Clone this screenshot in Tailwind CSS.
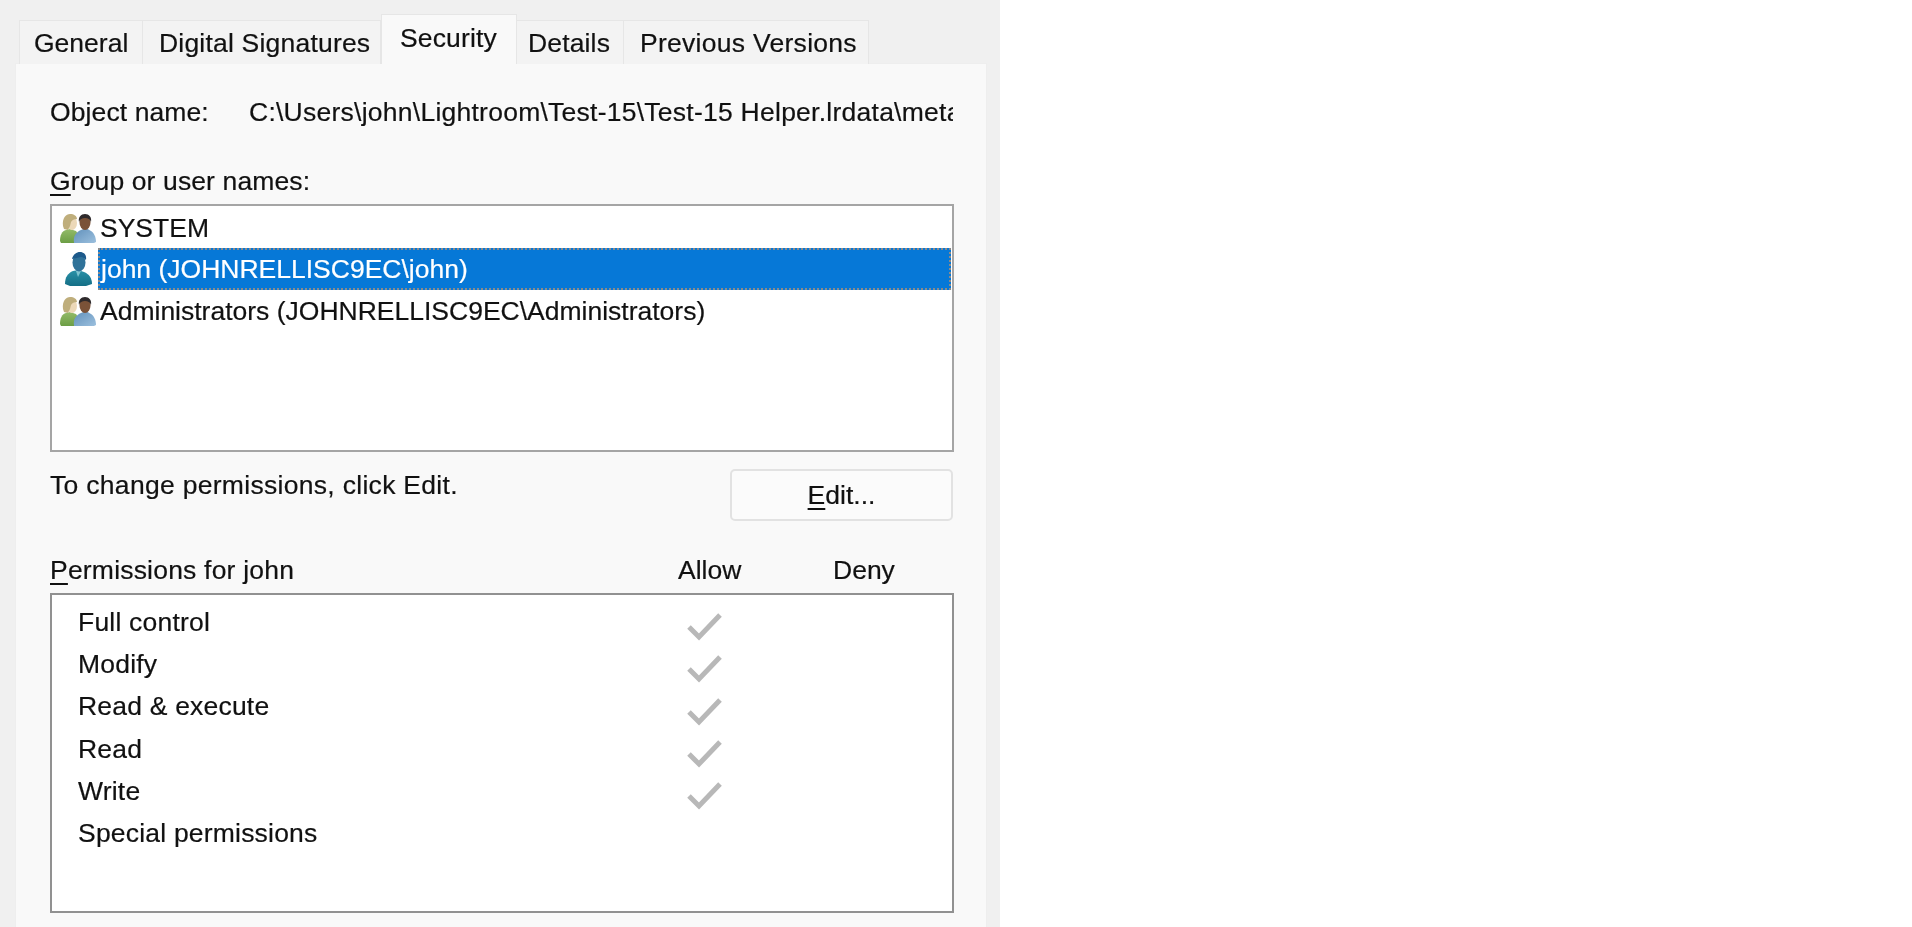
<!DOCTYPE html>
<html>
  <head>
    <title>Security</title>
    <script src="https://cdn.jsdelivr.net/npm/@tailwindcss/browser@4"></script>
  </head>
  <body class="bg-white">
    <svg width="0" height="0" class="absolute">
      <defs>
        <linearGradient id="male-shirt" x1="0" y1="0" x2="1" y2="1">
          <stop offset="0" stop-color="#5f8fba" />
          <stop offset="1" stop-color="#9cc0de" />
        </linearGradient>
        <linearGradient id="female-shirt" x1="0" y1="0" x2="0" y2="1">
          <stop offset="0" stop-color="#93bb6a" />
          <stop offset="1" stop-color="#6c9e45" />
        </linearGradient>
        <linearGradient id="user-shirt" x1="0" y1="0" x2="0" y2="1">
          <stop offset="0" stop-color="#2a91a8" />
          <stop offset="1" stop-color="#146f86" />
        </linearGradient>
        <symbol id="group" viewBox="0 0 36 30">
          <path d="M0 28c0-6 2-10 6-11l4-1 6 2 4 6v6H1z" fill="url(#female-shirt)" />
          <ellipse cx="12" cy="10" rx="5" ry="7" fill="#ecd8b8" />
          <path d="M3 13C2 5 6 1 10 1s7 2 7 5c-3 0-5 1-6 3l-1 4-2 4-4-1z" fill="#bfae7c" />
          <path d="M14 30c-1-7 2-11 7-13l5-2 5 3c3 2 5 6 5 11l-2 1z" fill="url(#male-shirt)" />
          <ellipse cx="25" cy="9.5" rx="5.5" ry="7.5" fill="#7a5238" />
          <path d="M19 9c-1-5 2-8 6-8s7 3 6 8c-1-3-3-4-6-4s-5 1-6 4z" fill="#2e2a2c" />
        </symbol>
        <symbol id="user" viewBox="0 0 27 34">
          <path d="M0 32c0-7 3-11 8-13l5-1 6 2c5 2 8 6 8 12l-6 2H5z" fill="url(#user-shirt)" />
          <path d="M11 19l2 6 3-6z" fill="#7cc3cf" />
          <ellipse cx="14" cy="10.5" rx="6.5" ry="9" fill="#2f7299" />
          <path d="M7 7c1-4 4-7 8-7s7 3 6 8c-2-2-3-3-5-3-3 1-6 1-9 2z" fill="#1d5a8b" />
        </symbol>
        <symbol id="check" viewBox="0 0 36 30">
          <path d="M2 15l10 10L33 3" fill="none" stroke="#b8b8b8" stroke-width="5" />
        </symbol>
      </defs>
    </svg>

    <div class="w-[1000px] h-[927px] overflow-hidden blur-[0.5px] bg-[#f0f0f0] text-[26.5px] leading-[32px] text-[#111] [-webkit-text-stroke:0.2px_#111] font-['Liberation_Sans',Arial,sans-serif]">
      <!-- tabs -->
      <div class="flex items-end h-[64px] pl-[19px] pt-[15px]">
        <div class="flex items-center h-[44px] w-[124px] pl-[14px] bg-[#f3f3f3] border border-b-0 border-[#e6e6e6]">General</div>
        <div class="flex items-center h-[44px] w-[238px] pl-[16px] tracking-[0.2px] bg-[#f3f3f3] border border-l-0 border-b-0 border-[#e6e6e6]">Digital Signatures</div>
        <div class="relative z-10 flex items-start h-[50px] w-[136px] pl-[18px] pt-[7px] tracking-[0.15px] bg-[#f9f9f9] border border-b-0 border-[#e6e6e6]">Security</div>
        <div class="flex items-center h-[44px] w-[107px] pl-[11px] tracking-[0.15px] bg-[#f3f3f3] border border-l-0 border-b-0 border-[#e6e6e6]">Details</div>
        <div class="flex items-center h-[44px] w-[245px] pl-[16px] tracking-[0.28px] bg-[#f3f3f3] border border-l-0 border-b-0 border-[#e6e6e6]">Previous Versions</div>
      </div>

      <!-- panel -->
      <div class="ml-[15px] w-[972px] h-[880px] pl-[34px] pr-[33px] -mt-px bg-[#f9f9f9] border border-[#eeeeee]">
        <div class="flex pt-[32px] h-[95px]">
          <div class="w-[199px] shrink-0 tracking-[0.1px]">Object name:</div>
          <div class="w-[704px] overflow-hidden whitespace-nowrap tracking-[0.25px]">C:\Users\john\Lightroom\Test-15\Test-15 Helper.lrdata\metadata</div>
        </div>

        <div class="h-[45px] pt-[6px] tracking-[0.12px]"><u class="underline-offset-[4px]">G</u>roup or user names:</div>

        <div class="w-[904px] h-[248px] bg-white border-2 border-[#a5a5a5] pt-[1px]">
          <div class="flex items-center h-[41px]">
            <svg class="w-[36px] h-[30px] ml-[8px] mr-[4px] shrink-0"><use href="#group" /></svg>
            <span>SYSTEM</span>
          </div>
          <div class="flex items-center h-[42px]">
            <svg class="w-[27px] h-[34px] ml-[13px] mr-[6px] shrink-0"><use href="#user" /></svg>
            <span class="flex items-center w-[853px] h-[42px] pl-[1px] bg-[#0678d7] text-white [-webkit-text-stroke:0.2px_#fff] border-2 border-dotted border-[#8a8a8a]">john (JOHNRELLISC9EC\john)</span>
          </div>
          <div class="flex items-center h-[41px]">
            <svg class="w-[36px] h-[30px] ml-[8px] mr-[4px] shrink-0"><use href="#group" /></svg>
            <span>Administrators (JOHNRELLISC9EC\Administrators)</span>
          </div>
        </div>

        <div class="flex justify-between items-start w-[903px] h-[100px] pt-[17px]">
          <div class="tracking-[0.3px]">To change permissions, click Edit.</div>
          <div class="flex items-center justify-center w-[223px] h-[52px] bg-[#fbfbfb] border-2 border-[#e2e2e2] rounded-[5px]"><span><u class="underline-offset-[4px]">E</u>dit...</span></div>
        </div>

        <div class="flex h-[41px] pt-[2px]">
          <div class="w-[628px] tracking-[0.2px]"><u class="underline-offset-[4px]">P</u>ermissions for john</div>
          <div class="w-[155px]">Allow</div>
          <div>Deny</div>
        </div>

        <div class="w-[904px] h-[320px] bg-white border-2 border-[#919191] pl-[26px] pt-[5.5px] tracking-[0.2px]">
          <div class="flex items-center h-[42.3px]"><span class="w-[609px]">Full control</span><svg class="w-[36px] h-[30px] mt-[11px]"><use href="#check" /></svg></div>
          <div class="flex items-center h-[42.3px]"><span class="w-[609px]">Modify</span><svg class="w-[36px] h-[30px] mt-[11px]"><use href="#check" /></svg></div>
          <div class="flex items-center h-[42.3px]"><span class="w-[609px]">Read &amp; execute</span><svg class="w-[36px] h-[30px] mt-[11px]"><use href="#check" /></svg></div>
          <div class="flex items-center h-[42.3px]"><span class="w-[609px]">Read</span><svg class="w-[36px] h-[30px] mt-[11px]"><use href="#check" /></svg></div>
          <div class="flex items-center h-[42.3px]"><span class="w-[609px]">Write</span><svg class="w-[36px] h-[30px] mt-[11px]"><use href="#check" /></svg></div>
          <div class="flex items-center h-[42.3px]"><span class="w-[609px]">Special permissions</span></div>
        </div>
      </div>
    </div>
  </body>
</html>
